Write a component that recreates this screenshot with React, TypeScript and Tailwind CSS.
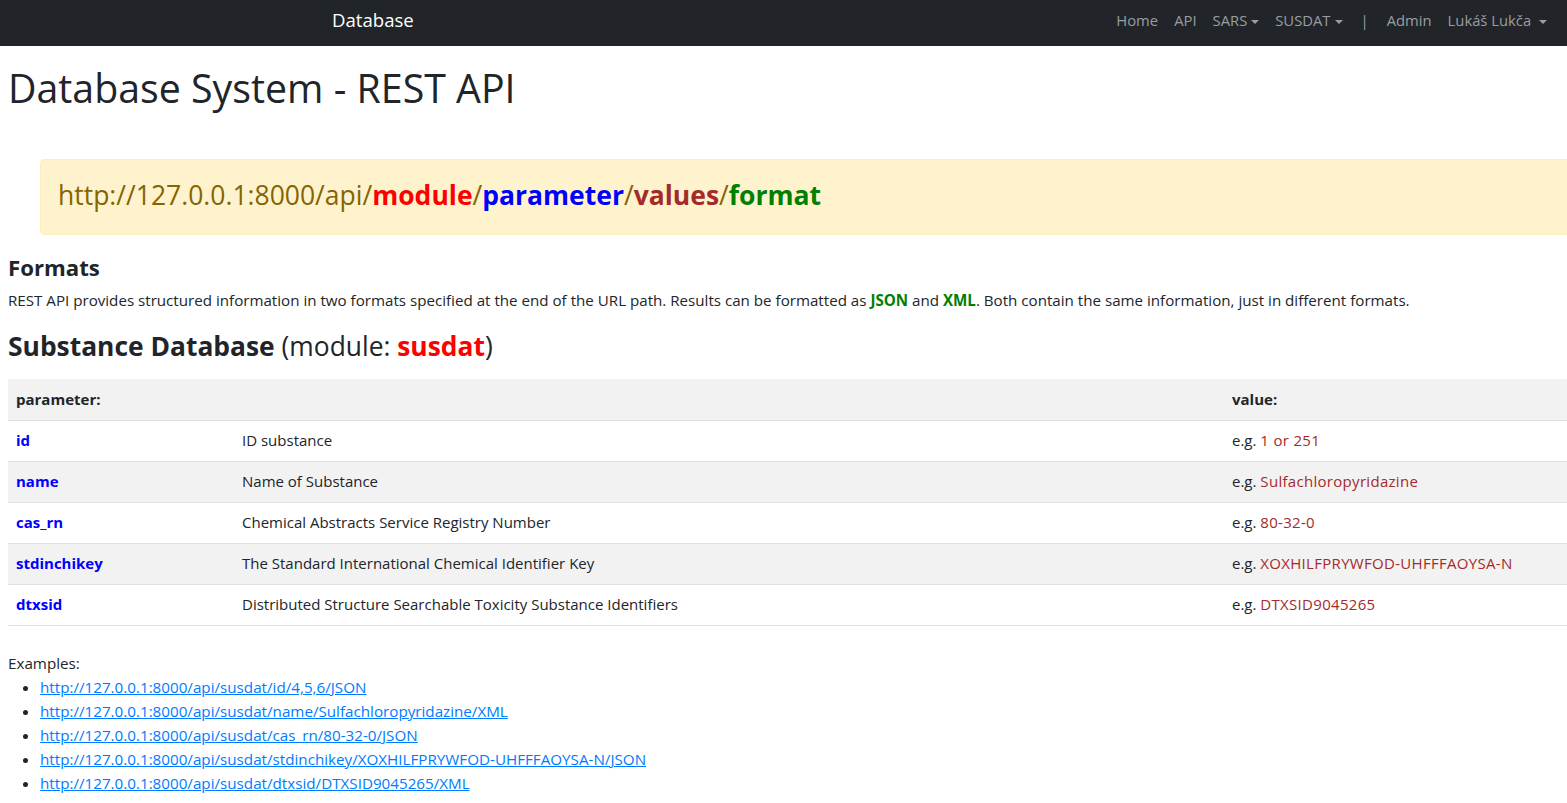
import React from "react";

const rows = [
  { p: "id", d: "ID substance", v: "1 or 251" },
  { p: "name", d: "Name of Substance", v: "Sulfachloropyridazine" },
  { p: "cas_rn", d: "Chemical Abstracts Service Registry Number", v: "80-32-0" },
  { p: "stdinchikey", d: "The Standard International Chemical Identifier Key", v: "XOXHILFPRYWFOD-UHFFFAOYSA-N" },
  { p: "dtxsid", d: "Distributed Structure Searchable Toxicity Substance Identifiers", v: "DTXSID9045265" },
];

const examples = [
  "http://127.0.0.1:8000/api/susdat/id/4,5,6/JSON",
  "http://127.0.0.1:8000/api/susdat/name/Sulfachloropyridazine/XML",
  "http://127.0.0.1:8000/api/susdat/cas_rn/80-32-0/JSON",
  "http://127.0.0.1:8000/api/susdat/stdinchikey/XOXHILFPRYWFOD-UHFFFAOYSA-N/JSON",
  "http://127.0.0.1:8000/api/susdat/dtxsid/DTXSID9045265/XML",
];

function Caret() {
  return <span className="inline-block ml-[4px] align-middle border-t-[4px] border-x-[4px] border-x-transparent border-t-current" />;
}

export default function App() {
  return (
    <div className="w-[1567px] h-[803px] overflow-hidden bg-white text-[#212529] font-['Open_Sans',sans-serif]">
      {/* Navbar */}
      <nav className="h-[46px] bg-[#212529] flex items-center pb-[6px] text-[14.8px]">
        <a className="ml-[332px] text-white text-[18.6px]">Database</a>
        <div className="ml-auto mr-[20px] flex items-center gap-[16px] text-[#9a9da0]">
          <span>Home</span>
          <span>API</span>
          <span>SARS<Caret /></span>
          <span>SUSDAT<Caret /></span>
          <span className="px-[2px]">|</span>
          <span>Admin</span>
          <span>Lukáš Lukča <Caret /></span>
        </div>
      </nav>

      <div className="px-2">
        <h1 className="mt-[18px] text-[39.3px] leading-[48px] font-normal">Database System - REST API</h1>

        {/* URL pattern */}
        <div className="mt-[47px] ml-[32px] w-[1600px] h-[76px] flex items-center pl-[17px] pb-[2px] bg-[#fff3cd] border border-[#ffeeba] rounded text-[#856404] text-[26.5px] font-normal">
          <span>
            http://127.0.0.1:8000/api/
            <b className="text-[#ff0000] font-bold">module</b>/
            <b className="text-[#0000ff] font-bold">parameter</b>/
            <b className="text-[#a52a2a] font-bold">values</b>/
            <b className="text-[#008000] font-bold">format</b>
          </span>
        </div>

        <h4 className="mt-[18px] text-[22.2px] leading-[29px] font-bold">Formats</h4>
        <p className="mt-[6px] text-[15.15px] leading-[24px]">
          REST API provides structured information in two formats specified at the end of the URL path. Results can be formatted as{" "}
          <b className="text-[#008000]">JSON</b> and <b className="text-[#008000]">XML</b>. Both contain the same information, just in different formats.
        </p>

        <h3 className="mt-[17px] text-[26.4px] leading-[34px]">
          <b>Substance Database</b> (module: <b className="text-[#ff0000]">susdat</b>)
        </h3>

        <table className="mt-[16px] w-[1700px] text-[15px] border-collapse">
          <thead>
            <tr className="bg-[#f2f2f2] border-b border-[#dee2e6]">
              <th className="w-[226px] h-[41px] px-2 text-left font-bold">parameter:</th>
              <th className="w-[990px] px-2" />
              <th className="px-2 text-left font-bold">value:</th>
            </tr>
          </thead>
          <tbody>
            {rows.map((r, i) => (
              <tr key={r.p} className={(i % 2 === 1 ? "bg-[#f2f2f2] " : "") + "border-b border-[#dee2e6]"}>
                <td className="h-[41px] px-2 font-bold text-[#0000ff]">{r.p}</td>
                <td className="px-2">{r.d}</td>
                <td className="px-2">
                  e.g. <span className="text-[#a52a2a] tracking-[0.3px]">{r.v}</span>
                </td>
              </tr>
            ))}
          </tbody>
        </table>

        <p className="mt-[25px] text-[15.2px] leading-[24px]">Examples:</p>
        <ul className="list-disc pl-[32px] text-[15.2px] leading-[24px]">
          {examples.map((e) => (
            <li key={e}>
              <a className="text-[#007bff] underline">{e}</a>
            </li>
          ))}
        </ul>
      </div>
    </div>
  );
}
